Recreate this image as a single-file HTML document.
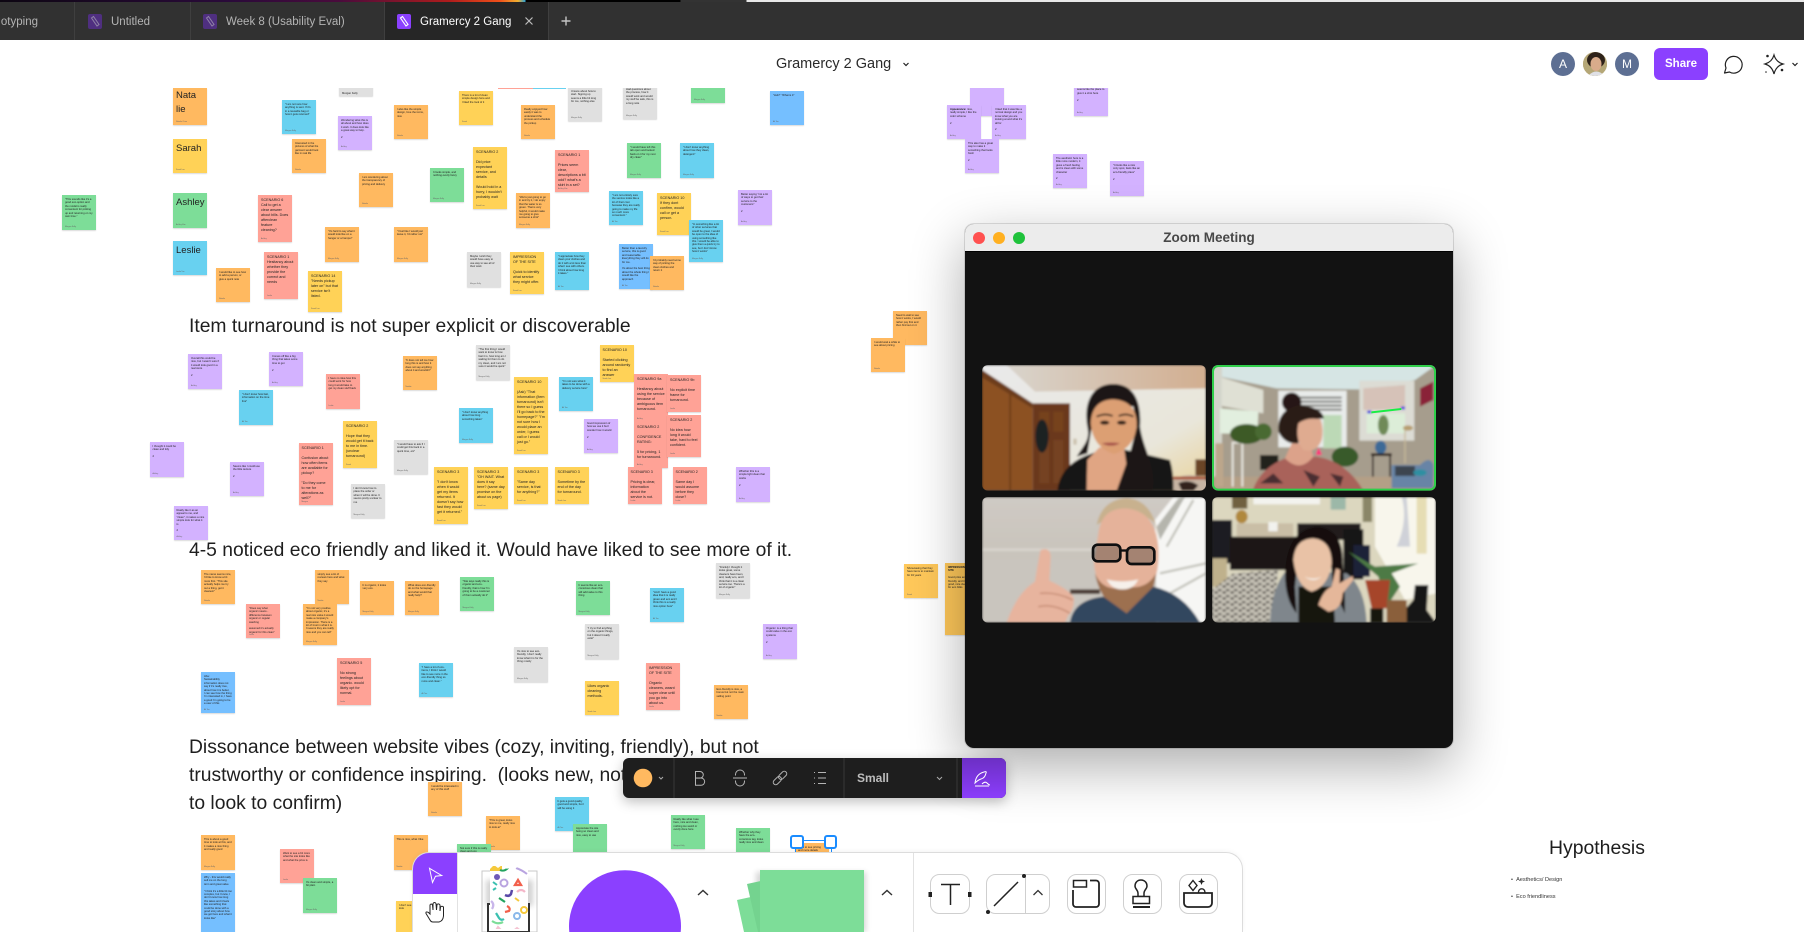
<!DOCTYPE html>
<html><head><meta charset="utf-8"><title>Gramercy 2 Gang</title>
<style>
html,body{margin:0;padding:0;width:1804px;height:932px;overflow:hidden;background:#fff;font-family:"Liberation Sans",sans-serif}
#root{position:absolute;left:0;top:0;width:1804px;height:932px;overflow:hidden;background:#fff}
.abs{position:absolute}
#strip{position:absolute;left:0;top:0;width:1804px;height:2px;background:linear-gradient(90deg,#0d0612 0,#2a0a3a 230px,#4a0b3c 340px,#b01c1c 450px,#f0501a 500px,#f0b030 518px,#30a0d0 525px,#000 526px,#000 680px,#333 681px,#333 746px,#e8e8e8 747px,#e8e8e8 1804px)}
#tabs{position:absolute;left:0;top:2px;width:1804px;height:38px;background:#313131}
#tabs .sep{position:absolute;top:0;width:1px;height:38px;background:#3f3f3f}
#tabs .lbl{position:absolute;top:13px;font-size:11.5px;line-height:14px;color:#b4b4b4;white-space:nowrap}
#active{position:absolute;left:384px;top:0;width:164px;height:38px;background:#262626}
#canvas{position:absolute;left:0;top:88px;width:1804px;height:844px;overflow:hidden;background:#fff}
#title{position:absolute;left:776px;top:55px;font-size:14.5px;line-height:18px;color:#2a2a2a;white-space:nowrap}
.n{position:absolute;width:34px;box-sizing:border-box;padding:3px 3px 0 3px;font-size:2.7px;line-height:3.4px;color:#222;box-shadow:0 1px 1px rgba(0,0,0,.14);overflow:hidden}
.n u{position:absolute;left:3px;bottom:2px;font-size:1.9px;line-height:2px;text-decoration:none;color:#666}
.n.h{font-size:3.7px;line-height:5px}
.n.k{font-size:9.5px;line-height:14px;padding:3px 3px}
.o{background:#ffb960}.y{background:#ffd257}.g{background:#7ddd98}.c{background:#68d1f0}.b{background:#75bfff}.s{background:#ffa296}.v{background:#d3b2ff}.e{background:#e0e0e0}
.hd{position:absolute;left:189px;font-size:19.3px;line-height:28px;color:#1e1e1e;white-space:nowrap;z-index:1}
#zoom{position:absolute;left:965px;top:224px;width:488px;height:524px;border-radius:9px;background:#121212;box-shadow:0 18px 55px rgba(0,0,0,.33),0 0 0 1px rgba(0,0,0,.12);z-index:10;overflow:hidden}
#zt{position:absolute;left:0;top:0;width:488px;height:28px;background:#ececec;text-align:center;font-size:13.5px;font-weight:bold;line-height:28px;color:#484848;border-bottom:1px solid #000;box-sizing:border-box}
.dot{position:absolute;top:8px;width:12px;height:12px;border-radius:50%}
#fmt{position:absolute;left:623px;top:758px;width:383px;height:40px;border-radius:6px;background:#1e1e1e;box-shadow:0 4px 12px rgba(0,0,0,.25);z-index:20;overflow:hidden}
#fmt .sp{position:absolute;top:0;width:2px;height:40px;background:#2b2b2b}
#fmt b{position:absolute;left:234px;top:13px;font-size:12px;line-height:14px;color:#bdbdbd}
#pen{position:absolute;left:339px;top:0;width:44px;height:40px;background:linear-gradient(#6c2fc4,#8b3dfb)}
#bar{position:absolute;left:413px;top:853px;width:829px;height:79px;background:#fff;border-radius:16px 16px 0 0;box-shadow:0 0 0 1px #dcdcdc,0 -1px 6px rgba(0,0,0,.06);z-index:20;overflow:hidden}
#share{position:absolute;left:1654px;top:48px;width:54px;height:32px;border-radius:6px;background:#8b40ff;color:#fff;font-size:11.5px;font-weight:bold;line-height:32px;text-align:center}
.av{position:absolute;top:52px;width:24px;height:24px;border-radius:50%;background:#5d6f93;color:#fff;text-align:center;line-height:24px;font-size:12px}
#hyp{position:absolute;left:1549px;top:836px;font-size:19.4px;line-height:24px;color:#1e1e1e;z-index:2}
.li{position:absolute;left:1511px;font-size:5.6px;line-height:8px;color:#333;white-space:nowrap}
svg{display:block}
</style></head><body>
<div id="root">
<div id="strip"></div>
<div id="tabs">
 <div id="active"></div>
 <div class="sep" style="left:74px"></div><div class="sep" style="left:190px"></div><div class="sep" style="left:384px"></div><div class="sep" style="left:548px"></div>
 <div class="lbl" style="left:0;width:38px;overflow:hidden;direction:rtl">otyping</div>
 <div class="lbl" style="left:111px">Untitled</div>
 <div class="lbl" style="left:226px">Week 8 (Usability Eval)</div>
 <div class="lbl" style="left:420px;color:#fff">Gramercy 2 Gang</div>
</div>

<div id="title">Gramercy 2 Gang</div>
<div class="av" style="left:1551px">A</div>
<div class="av" style="left:1583px;overflow:hidden;background:#b7a67a"><svg width="24" height="24"><rect width="24" height="24" fill="#b5a777"/><ellipse cx="13" cy="8" rx="9" ry="8" fill="#2e221a"/><ellipse cx="13" cy="12" rx="5.5" ry="7" fill="#d9ab8b"/><path d="M5 24 Q13 15 22 24Z" fill="#dfe0e6"/></svg></div>
<div class="av" style="left:1615px">M</div>
<div id="share">Share</div>

<div id="canvas"><div class="abs" style="left:0;top:-88px;width:1804px;height:932px">
<div class="n o k" style="left:173px;top:88px;height:37px;padding-top:1px">Nata<br>lie<u>Natalie Chan</u></div>
<div class="n y k" style="left:173px;top:139px;height:34px">Sarah<u>Sarah Lee</u></div>
<div class="n g k" style="left:173px;top:193px;height:35px">Ashley<u>Ashley Kim</u></div>
<div class="n c k" style="left:173px;top:241px;height:34px">Leslie<u>Leslie Tan</u></div>
<div class="n g" style="left:62px;top:195px;height:35px">"This sounds like it's a good eco-option and the model is really convenient for picking up and returning on my own time."<u>Morgan Kelly</u></div>
<div class="n c" style="left:282px;top:100px;height:34px">"I am not sure how anything is sent. If it's in a reusable bag or how it gets returned"<u>Morgan Kelly</u></div>
<div class="n e" style="left:339px;top:75px;height:21px"><br><br><br><br>Morgan Kelly</div>
<div class="n v" style="left:338px;top:116px;height:34px">Wondering what this is all about and how does it work. It does look like a great way to help.<br><br>2<u>Ashley</u></div>
<div class="n o" style="left:292px;top:139px;height:34px">Interested in the pictures of what the garment would look like in real life<u>Natalie</u></div>
<div class="n o" style="left:394px;top:105px;height:34px">I also like the simple design, love the icons, nice<u>Natalie</u></div>
<div class="n y" style="left:459px;top:91px;height:34px">There is a lot of clean simple design here and I liked the look of it<u>Sarah</u></div>
<div class="n o" style="left:521px;top:105px;height:34px">Really enjoyed how easily it was to understand the process and schedule the pickup<u>Natalie</u></div>
<div class="n e" style="left:568px;top:87px;height:34px">Unsure about how to start. Signing up seems a little bit long for me, nothing else<u>Morgan Kelly</u></div>
<div class="n e" style="left:623px;top:85px;height:34px">Had questions about the process, how it would work and would my stuff be safe, this is a long note<u>Morgan Kelly</u></div>
<div class="n g" style="left:691px;top:69px;height:34px"><u>Morgan Kelly</u></div>
<div class="n b" style="left:770px;top:91px;height:34px">"Huh!" "What is it"<u>Ali Tan</u></div>
<div class="abs" style="left:498px;top:88px;width:35px;height:1px;background:#ffa296"></div>
<div class="abs" style="left:533px;top:88px;width:33px;height:1px;background:#68d1f0"></div>
<div class="n y h" style="left:473px;top:147px;height:62px">SCENARIO 2<br><br>Did price expectant service, and details<br><br>Would hold in a hurry, I wouldn't probably wait<u>Sarah Lee</u></div>
<div class="n s h" style="left:555px;top:150px;height:42px">SCENARIO 1<br><br>Prices seem clear, descriptions a bit odd? what's a skirt in a set?<u>Ashley Kim</u></div>
<div class="n g" style="left:627px;top:143px;height:35px">"I would have left this tab open and looked back on it for my next dry clean"<u>Morgan Kelly</u></div>
<div class="n c" style="left:680px;top:143px;height:35px">"I don't know anything about how they clean, detergent"<u>Morgan Kelly</u></div>
<div class="n o" style="left:359px;top:173px;height:34px">I am wondering about the transparency of pricing and delivery<u>Natalie</u></div>
<div class="n g" style="left:430px;top:168px;height:34px">It looks simple, and nothing overly fancy<u>Morgan Kelly</u></div>
<div class="n s h" style="left:258px;top:195px;height:47px">SCENARIO 6<br>Call to get a clear answer about bills. Does afterclean feature cleaning?<u>Ashley</u></div>
<div class="n o" style="left:516px;top:193px;height:35px">"We're just going to go in and try it, I do enjoy that the water is so green. That is very helpful, it would make me going to give someone a shot"<u>Morgan Kelly</u></div>
<div class="n c" style="left:609px;top:191px;height:34px">"I am not entirely sure the service looks like a lot of their cost because they are really going to make my life so much more convenient."<u>Ali Tan</u></div>
<div class="n y h" style="left:657px;top:193px;height:42px">SCENARIO 10<br>If they dont confirm, would call or get a person.<u>Sarah Lee</u></div>
<div class="n v" style="left:738px;top:190px;height:35px">Better saying "not a lot of ways to get their service to the customers"<br><br>2<u>Ashley</u></div>
<div class="n c" style="left:689px;top:220px;height:42px">"In something like a lot of other services that would be great, I would be open to the idea of using something like this. I would be able to give them a quick try to see, but I don't know how it works"<u>Morgan Kelly</u></div>
<div class="n o" style="left:325px;top:227px;height:35px">"It's hard to say what it would look like on a hanger or a hamper"<u>Morgan Kelly</u></div>
<div class="n o" style="left:394px;top:227px;height:35px">"I feel like I would just leave it, I'd rather not"<u>Morgan Kelly</u></div>
<div class="n s h" style="left:264px;top:252px;height:47px">SCENARIO 1<br>Hesitancy about whether they provide the correct and needs<u>Leslie</u></div>
<div class="n o" style="left:216px;top:268px;height:34px">I would like to see how to add a person, or give a quick note<u>Natalie</u></div>
<div class="n y h" style="left:308px;top:271px;height:41px">SCENARIO 14<br>"Needs pickup later on" but that service isn't listed.<u>Sarah Lee</u></div>
<div class="n e" style="left:467px;top:252px;height:35px">Maybe I wish they would have easy to use way to see all of their work<u>Morgan Kelly</u></div>
<div class="n y h" style="left:510px;top:252px;height:42px">IMPRESSION OF THE SITE<br><br>Quick to identify what service they might offer.<u>Sarah Lee</u></div>
<div class="n c" style="left:555px;top:252px;height:38px">"I appreciate how they clean your clothes and do it with a lot less than what I see with others. I think about how long it takes."<u>Ali Tan</u></div>
<div class="n b" style="left:619px;top:244px;height:45px">Better than a laundry service, this is good and reasonable. Everything they will do for me.<br><br>It's about the best thing about the whole thing I would like the approach<u>Ali Tan</u></div>
<div class="n o" style="left:650px;top:256px;height:34px">I'd probably need some way of picking the clean clothes and return it<u>Natalie</u></div>

<div class="n v" style="left:970px;top:75px;height:41px">Wonder this</div>
<div class="n v" style="left:947px;top:105px;height:34px"><b>Appearance:</b> nice, really simple, I like the color scheme<br><br>2<u>Ashley</u></div>
<div class="n v" style="left:992px;top:105px;height:34px">I liked that it was like a normal design and you know what you are looking at and what it's all for<br><br>2<u>Ashley</u></div>
<div class="n v" style="left:965px;top:139px;height:34px">This also has a great way to make it something that looks fresh<br><br>2<u>Ashley</u></div>
<div class="n v" style="left:1074px;top:82px;height:34px">Nice and clean look, it seems like the place to give it a shot here<br><br>2<u>Ashley</u></div>
<div class="n v" style="left:1053px;top:154px;height:34px">The aesthetic here is a little more modern, it gives a fresh feeling and is clean with some character<br><br>2<u>Ashley</u></div>
<div class="n v" style="left:1110px;top:161px;height:35px">"It looks like a nice cozy spot, feels like an eco-friendly place"<br><br>2<u>Ashley</u></div>
<div class="n o" style="left:893px;top:311px;height:34px">Need to wait to see how it works, I would rather pay first and then find out on it<u>Natalie</u></div>
<div class="n o" style="left:871px;top:338px;height:34px">I would wait a while to see about pricing<u>Natalie</u></div>

<div class="n v" style="left:188px;top:354px;height:35px">Overall this could be nice, but I wasn't sure if it would look good in a real store<br><br>2<u>Ashley</u></div>
<div class="n v" style="left:269px;top:352px;height:34px">Comes off like a big thing that takes some time to get<br><br>2<u>Ashley</u></div>
<div class="n s" style="left:325.5px;top:374px;height:35px">I have no idea how this could work for how long it would take to get my clean stuff back<u>Leslie</u></div>
<div class="n o" style="left:402.5px;top:356px;height:34px">"It does not tell me how long this is and how it does not say anything about it and wouldn't"<u>Natalie</u></div>
<div class="n e" style="left:475.5px;top:345px;height:35px">"The first thing I would want to know is how fast it is, how long am I waiting for them to do my clean, and I am not sure it would be quick"<u>Morgan Kelly</u></div>
<div class="n y h" style="left:599.5px;top:345px;height:37px">SCENARIO 10<br><br>Started clicking around randomly to find an answer<u>Sarah Lee</u></div>
<div class="n c" style="left:239px;top:390px;height:35px">"I don't know how fast, information on the time line"<u>Ali Tan</u></div>
<div class="n y h" style="left:514px;top:377px;height:77px">SCENARIO 10<br><br>(Ask) "That information (item turnaround) isn't there so I guess I'll go back to the homepage?" "I'm not sure how I would place an order, I guess call or I would just go."<u>Sarah Lee</u></div>
<div class="n c" style="left:559px;top:377px;height:34px">"I'm not sure what it takes to be done with a delivery service here"<u>Ali Tan</u></div>
<div class="n s h" style="left:634px;top:374px;height:48px">SCENARIO 9a<br><br>Hesitancy about using the service because of ambiguous item turnaround.<u>Ashley</u></div>
<div class="n s h" style="left:634px;top:422px;height:46px">SCENARIO 2<br><br>CONFIDENCE RATING:<br><br>5 for pricing, 1 for turnaround.<u>Ashley</u></div>
<div class="n s h" style="left:667px;top:375px;height:37px">SCENARIO 9b<br><br>No explicit time frame for turnaround.<u>Leslie</u></div>
<div class="n s h" style="left:667px;top:415px;height:42px">SCENARIO 2<br><br>No idea how long it would take, hard to feel confident.<u>Leslie</u></div>
<div class="n c" style="left:459px;top:408px;height:35px">"I don't know anything about how long something takes"<u>Morgan Kelly</u></div>
<div class="n v" style="left:584px;top:419px;height:34px">Good impression of how we use it but I wonder how it would<br><br>2<u>Ashley</u></div>
<div class="n y h" style="left:343px;top:421px;height:47px">SCENARIO 2<br><br>Hope that they would get it back to me in time. (unclear turnaround)<u>Sarah</u></div>
<div class="n e" style="left:394px;top:440px;height:34px">"I would have to ask if I could get this back in a quick time, etc"<u>Morgan Kelly</u></div>
<div class="n s h" style="left:298.5px;top:443px;height:62px">SCENARIO 1<br><br>Confusion about how often items are available for pickup?<br><br>"Do they come to me for alterations as well?"<u>Morgan</u></div>
<div class="n v" style="left:149.5px;top:442px;height:35px">I thought it could be clean and tidy<br><br>2<u>Ashley</u></div>
<div class="n v" style="left:230px;top:462px;height:34px">Seems like I could use the little texture<br><br>2<u>Ashley</u></div>
<div class="n e" style="left:350.5px;top:484px;height:34px">I don't know how to place the order or when it will be done. It seems pretty unclear to me<u>Morgan Kelly</u></div>
<div class="n y h" style="left:434px;top:467px;height:57px">SCENARIO 3<br><br>"I don't know when it would get my items returned. It doesn't say how fast they would get it returned."<u>Sarah Lee</u></div>
<div class="n y h" style="left:474px;top:467px;height:42px">SCENARIO 3<br>"OH WAIT. What does it say here? (same day promise on the about us page)<u>Sarah Lee</u></div>
<div class="n y h" style="left:514px;top:467px;height:37px">SCENARIO 3<br><br>"Same day service, is that for anything?"<u>Sarah Lee</u></div>
<div class="n y h" style="left:554.5px;top:467px;height:37px">SCENARIO 3<br><br>Sometime by the end of the day for turnaround.<u>Sarah Lee</u></div>
<div class="n s h" style="left:627.5px;top:467px;height:37px">SCENARIO 3<br><br>Pricing is clear, information about the service is not.<u>Leslie</u></div>
<div class="n s h" style="left:672.5px;top:467px;height:37px">SCENARIO 2<br><br>Same day I would assume before they close?<u>Leslie</u></div>
<div class="n v" style="left:736px;top:467px;height:35px">Whether this is a simple light clean that works<br><br>2<u>Ashley</u></div>
<div class="n v" style="left:173.5px;top:506px;height:34px">Really like it as an appeal to me, and "clean", it makes a nice simple look for what it is<br><br>2<u>Ashley</u></div>

<div class="n o" style="left:201px;top:570px;height:34px">The name seems nice, I'd like to know a bit more first. "This site actually helps me try out a thing, get it cleaned."<u>Natalie</u></div>
<div class="n o" style="left:314.5px;top:570px;height:34px">simply see a lot of reviews here and what they say<u>Natalie</u></div>
<div class="n s" style="left:246px;top:604px;height:34px">"Does say what organic means - difference between organic or regular washing<br><br>assumed it's actually organic for this clean"<u>Leslie</u></div>
<div class="n o" style="left:303px;top:604px;height:41px">"I'm not very positive about organic, it's a real nice value it would make a company's impression. There is a lot of trust in what it is. It seems they are really nice and you can tell"<u>Morgan Kelly</u></div>
<div class="n o" style="left:359.5px;top:581px;height:34px">It is organic, it looks very eco.<u>Morgan Kelly</u></div>
<div class="n o" style="left:405px;top:581px;height:34px">What does eco-friendly do on the homepage and what would that really help?<u>Morgan Kelly</u></div>
<div class="n g" style="left:459.5px;top:577px;height:34px">"Site says really this is organic and eco-friendly, that is how I'm going to be a customer of them actually do it"<u>Morgan Kelly</u></div>
<div class="n g" style="left:575.5px;top:581px;height:34px">It seems like an eco-conscious clean that will add value to this thing<u>Morgan Kelly</u></div>
<div class="n c" style="left:650px;top:588px;height:34px">"And I have a good idea that it is really green and eco and I think this is a really nice option here"<u>Ali Tan</u></div>
<div class="n e" style="left:716px;top:563px;height:35px">"Frankly I thought it looks great, some cleaners have been, and, really eco, and I think that it is a clean service too. There's a lot of organic"<u>Morgan Kelly</u></div>
<div class="n e" style="left:584.5px;top:624px;height:35px">"I try to find anything on the organic things, but it doesn't really exist"<u>Morgan Kelly</u></div>
<div class="n v" style="left:763px;top:624px;height:35px">Organic: is a thing that could value in the eco systems<br><br>2<u>Ashley</u></div>
<div class="n e" style="left:514px;top:647px;height:35px">It's nice to see eco-friendly, I don't really know what it is for the thing mostly<u>Morgan Kelly</u></div>
<div class="n b" style="left:201px;top:672px;height:41px">Aha:<br>Sustainability information does not say if it's really true, about how it is better,<br>I can see how the thing I'm interested in, I have a good I'm going to be a user of this<u>Ali Tan</u></div>
<div class="n s h" style="left:337px;top:658px;height:47px">SCENARIO 5<br><br>No strong feelings about organic. would likely opt for normal.<u>Leslie</u></div>
<div class="n c" style="left:418.5px;top:663px;height:34px">"I have a lot of eco-items, I think I would like to see more in the eco-friendly thing so more and clean."<u>Ali Tan</u></div>
<div class="n s h" style="left:646px;top:663px;height:47px">IMPRESSION OF THE SITE<br><br>Organic cleaners, wasnt super clear until you go into about us.<u>Leslie</u></div>
<div class="n y h" style="left:584.5px;top:681px;height:34px">Likes organic cleaning methods.<u>Sarah Lee</u></div>
<div class="n o" style="left:713.5px;top:685px;height:34px">Eco-friendly is nice, a bonus but not the main selling point<u>Natalie</u></div>

<div class="n c" style="left:554.5px;top:797px;height:34px">It gets a good quality good and simple, but I will be using it<u>Ali Tan</u></div>
<div class="n o" style="left:486px;top:816px;height:34px">"This is great, looks nice to me, really nice to look at"<u>Natalie</u></div>
<div class="n g" style="left:573px;top:824px;height:34px">Appreciate the site being so clean and nice, easy to use<u>Morgan Kelly</u></div>
<div class="n g" style="left:670.5px;top:815px;height:34px">Really like what I see here, nice and clean, nothing too weird or overly done here<u>Morgan Kelly</u></div>
<div class="n g" style="left:736px;top:828px;height:34px">Whether why they have the eco-conscious tag, looks really nice and clean<u>Morgan Kelly</u></div>
<div class="n o" style="left:201px;top:835px;height:35px">This is about a good time to look at this, and it makes a nice thing and really good<u>Morgan Kelly</u></div>
<div class="n s" style="left:280px;top:849px;height:34px">Want to see a bit more what the site looks like and what the price is<u>Leslie</u></div>
<div class="n o" style="left:393.5px;top:835px;height:35px">This is nice, what I like<u>Natalie</u></div>
<div class="n g" style="left:457px;top:844px;height:34px">Not sure if this is really clean and eco<u>Morgan</u></div>
<div class="n g" style="left:303px;top:878px;height:35px">It's clean and simple, a bit plain<u>Morgan Kelly</u></div>
<div class="n b" style="left:201px;top:873px;height:59px">Why - this would really sell me on the long term and great value<br><br>"I think it's a little bit too complex, but I know, I don't know how long this takes and it feels like something that could be done with a good story about how we got here and what it looks like"</div>
<div class="n y" style="left:396px;top:901px;height:31px">I don't see how it would look</div>
<div class="n o" style="left:795px;top:843px;height:34px">Want to see pricing and more details</div>

<div class="hd" style="top:313px">Item turnaround is not super explicit or discoverable</div>
<div class="hd" style="top:537px">4-5 noticed eco friendly and liked it. Would have liked to see more of it.</div>
<div class="hd" style="top:734px">Dissonance between website vibes (cozy, inviting, friendly), but not<br>trustworthy or confidence inspiring.&nbsp; (looks new, not sure where<br>to look to confirm)</div>
<div id="hyp">Hypothesis</div>
<div class="li" style="top:876px">•&nbsp;&nbsp;Aesthetics/ Design</div>
<div class="li" style="top:893px">•&nbsp;&nbsp;Eco friendliness</div>
<div class="n o" style="left:428px;top:782px;height:34px;z-index:2">I would be interested in any of this stuff<u>Natalie</u></div>
<div class="n y" style="left:904px;top:564px;height:34px;background:#ffc85a">Showcasing that they have items to maintain for 34 years<u>Sarah</u></div>
<div class="n y" style="left:945px;top:563px;height:72px;background:#ffc85a"><b>IMPRESSION OF THE SITE</b><br><br>Good price and friendly, and trust is good, nice clean look for eco folks</div>
<div class="abs" style="left:790px;top:835px;width:10px;height:10px;border:2px solid #1a8cff;border-radius:3px;background:#fff;z-index:3"></div>
<div class="abs" style="left:824px;top:835px;width:9px;height:10px;border:2px solid #1a8cff;border-radius:3px;background:#fff;z-index:3"></div>
<div class="abs" style="left:795px;top:840px;width:35px;height:40px;border:1.5px solid #1a8cff;z-index:2"></div>
</div></div>

<div id="zoom">
 <div id="zt">Zoom Meeting</div>
 <div class="dot" style="left:8px;background:#ff5150"></div>
 <div class="dot" style="left:28px;background:#ffb021"></div>
 <div class="dot" style="left:48px;background:#1fc23b"></div>
</div>

<svg class="abs" style="left:970px;top:360px;z-index:11" width="480" height="270" viewBox="0 0 1440 810">
<defs>
<clipPath id="t1"><rect x="36" y="15" width="672" height="377" rx="18"/></clipPath>
<clipPath id="t2"><rect x="726" y="15" width="672" height="377" rx="18"/></clipPath>
<clipPath id="t3"><rect x="36" y="411" width="672" height="377" rx="18"/></clipPath>
<clipPath id="t4"><rect x="726" y="411" width="672" height="377" rx="18"/></clipPath>
<filter id="bl"><feGaussianBlur stdDeviation="3"/></filter>
<linearGradient id="w1" x1="0" x2="1" y1="0" y2="1"><stop offset="0" stop-color="#e9e9ea"/><stop offset=".7" stop-color="#e9e6da"/><stop offset="1" stop-color="#e8d299"/></linearGradient>
<linearGradient id="c1" x1="0" x2="1"><stop offset="0" stop-color="#d9d4cc"/><stop offset="1" stop-color="#d2ae90"/></linearGradient>
<linearGradient id="w3" x1="0" x2="0" y1="0" y2="1"><stop offset="0" stop-color="#cfcac4"/><stop offset=".45" stop-color="#c9c4bc"/><stop offset="1" stop-color="#c5c0b8"/></linearGradient>
<pattern id="rug" width="24" height="18" patternUnits="userSpaceOnUse"><rect width="24" height="18" fill="#c4c0b4"/><path d="M0 4h10v5H0zM14 11h9v5h-9z" fill="#1a1714"/></pattern>
</defs>
<g clip-path="url(#t1)"><g filter="url(#bl)">
<rect x="36" y="15" width="672" height="377" fill="url(#w1)"/>
<polygon points="110,15 708,15 708,85 195,95" fill="url(#c1)"/>
<polygon points="36,30 188,130 188,392 36,392" fill="#8c5124"/>
<polygon points="36,30 188,130 188,145 36,52" fill="#6d3d1c"/>
<rect x="118" y="100" width="5" height="292" fill="#6a3a18"/>
<rect x="188" y="130" width="112" height="262" fill="#6a381b"/>
<rect x="208" y="155" width="30" height="60" fill="#76431f"/><rect x="250" y="155" width="30" height="60" fill="#76431f"/>
<rect x="208" y="240" width="30" height="130" fill="#754220"/><rect x="250" y="240" width="30" height="130" fill="#754220"/>
<ellipse cx="216" cy="228" rx="20" ry="50" fill="#1e2022"/>
<rect x="310" y="236" width="10" height="18" fill="#cbc1ad"/>
<rect x="676" y="298" width="32" height="50" fill="#6a4426"/>
<ellipse cx="660" cy="375" rx="55" ry="30" fill="#c6b4a3"/><path d="M625 370q30-15 60 6l-14 16h-36z" fill="#30241e"/><rect x="610" y="350" width="98" height="8" fill="#a6492c"/>
<path d="M262 392 Q270 320 345 288 L400 268 L460 268 L600 300 Q612 340 610 392Z" fill="#171314"/>
<path d="M350 392 L352 300 L388 262 L462 262 L470 320 L450 392Z" fill="#e0a583"/>
<path d="M352 200 C340 130 365 72 430 72 C495 72 515 130 510 200 C520 270 560 320 548 392 L440 392 L480 280 L500 200 L490 140 Q430 130 370 170 L362 220 L352 280 L320 290 C345 250 360 240 352 200Z" fill="#1d1613"/>
<path d="M362 190 Q365 120 430 118 Q498 122 500 190 Q498 262 432 282 Q368 262 362 190Z" fill="#dc9f73"/>
<path d="M380 170q25-12 48-2M446 168q22-10 44 2" stroke="#1c1310" stroke-width="5" fill="none"/>
<ellipse cx="404" cy="188" rx="14" ry="6" fill="#2a1e18"/><ellipse cx="455" cy="188" rx="14" ry="6" fill="#2a1e18"/>
<path d="M395 250q28 14 55 0q-26-4-55 0Z" fill="#a54f48"/>
</g></g>
<g clip-path="url(#t2)"><g filter="url(#bl)">
<rect x="726" y="15" width="672" height="377" fill="#a69d8d"/>
<polygon points="735,15 1398,15 1335,60 1170,88 920,85 750,50" fill="#d6e5e4"/>
<rect x="726" y="15" width="30" height="377" fill="#d3d4cb"/>
<polygon points="755,52 880,90 880,160 755,138" fill="#dfe0d4"/>
<polygon points="750,145 865,155 862,222 750,220" fill="#e2efdf"/>
<rect x="925" y="92" width="205" height="170" fill="#e8ebea"/>
<rect x="1060" y="165" width="55" height="100" fill="#bcd9b6"/>
<path d="M985 110h130v6h-130zM985 122h130v6h-130zM985 134h130v6h-130zM985 146h130v6h-130z" fill="#7d7d78"/>
<rect x="1168" y="62" width="165" height="180" fill="#dcdcd4"/>
<polygon points="1180,85 1305,75 1305,148 1180,150" fill="#d6c2b8"/>
<rect x="1190" y="160" width="115" height="60" fill="#dcedd8"/>
<ellipse cx="1240" cy="195" rx="16" ry="30" fill="#6f8a58"/>
<ellipse cx="1232" cy="262" rx="17" ry="20" fill="#3c6a97"/>
<rect x="1203" y="280" width="62" height="8" fill="#2c1e18"/><rect x="1206" y="288" width="5" height="85" fill="#2c1e18"/><rect x="1258" y="288" width="5" height="85" fill="#2c1e18"/>
<rect x="1303" y="205" width="4" height="105" fill="#c8b99a"/><ellipse cx="1314" cy="204" rx="15" ry="8" fill="#b79e6f"/>
<polygon points="1350,85 1390,65 1390,120 1350,140" fill="#8a2338"/>
<rect x="726" y="350" width="672" height="42" fill="#b49f86"/>
<path d="M1265 315h85q30-30 40 0v70h-125z" fill="#6884a6"/><rect x="1275" y="318" width="60" height="30" fill="#3d4450"/><ellipse cx="1350" cy="338" rx="20" ry="10" fill="#2e8fa2"/>
<rect x="736" y="250" width="24" height="130" fill="#bca68b"/>
<rect x="785" y="245" width="60" height="6" fill="#e8e6df"/><rect x="785" y="250" width="6" height="130" fill="#e8e6df"/><rect x="814" y="250" width="6" height="130" fill="#e8e6df"/>
<ellipse cx="830" cy="222" rx="50" ry="30" fill="#3c5a26"/><ellipse cx="880" cy="215" rx="25" ry="25" fill="#4a6b33"/>
<ellipse cx="1125" cy="290" rx="40" ry="30" fill="#385a2b"/>
<rect x="870" y="285" width="55" height="45" fill="#23201f"/>
<path d="M848 392 Q870 325 945 295 L1040 290 Q1130 305 1180 392Z" fill="#a9625a"/>
<path d="M870 370l40-30 30 30zM1000 330l50 20-20 30zM1080 340l40 10-10 30z" fill="#4a2f30"/>
<path d="M945 295 Q990 340 1030 290 L1020 250 L965 250Z" fill="#dca28a"/>
<circle cx="965" cy="127" r="29" fill="#261712"/>
<path d="M925 215 Q920 150 985 135 Q1055 140 1062 175 L1005 180 L985 250 Q945 255 925 215Z" fill="#2a1a14"/>
<path d="M985 190 Q1010 170 1052 178 Q1062 210 1055 240 Q1040 280 1000 270 Q975 240 985 190Z" fill="#dfab90"/>
<polygon points="1037,285 1046,262 1056,285" fill="#ff2f7a"/>
<rect x="1192" y="152" width="12" height="8" fill="#2222dd"/><rect x="1293" y="140" width="12" height="8" fill="#2222dd"/>
</g><polygon points="1204,154 1294,144 1294,150 1204,160" fill="#18ee44"/></g>
<rect x="729" y="18" width="666" height="371" rx="16" fill="none" stroke="#2fcf4a" stroke-width="6"/>
<g clip-path="url(#t3)"><g filter="url(#bl)">
<rect x="36" y="411" width="672" height="377" fill="url(#w3)"/>
<rect x="36" y="565" width="530" height="8" fill="#d8d4cd"/><rect x="36" y="597" width="530" height="191" fill="#c9c5be"/>
<polygon points="555,480 610,411 708,411 708,788 560,788" fill="#f6f6f4"/>
<path d="M560 500 L625 415 L645 411 L570 540Z" fill="#b5b5ad"/>
<path d="M590 560 L670 420 M570 640 L708 610 M600 700 L708 640" stroke="#c2c2ba" stroke-width="7" fill="none"/>
<rect x="300" y="688" width="90" height="14" fill="#4b3c36"/>
<path d="M380 495 Q395 420 470 414 Q550 420 565 530 L555 490 Q500 440 420 470Z" fill="#c8b18e"/>
<path d="M385 520 Q395 445 465 445 Q555 450 565 560 Q575 700 470 758 Q385 730 372 610Z" fill="#e5b29a"/>
<path d="M375 640 Q400 700 470 680 Q530 690 558 640 Q550 730 470 760 Q395 740 375 640Z" fill="#9d7050"/>
<path d="M410 658 Q455 670 505 658 Q490 690 455 688 Q425 688 410 658Z" fill="#f6f0ea"/>
<path d="M300 788 Q310 720 400 710 L470 760 L550 680 Q640 700 690 788Z" fill="#33465e"/>
<path d="M110 788 Q140 700 195 665 Q205 600 212 570 Q240 560 242 590 L238 662 Q300 690 312 715 Q312 750 295 765 L285 788Z" fill="#e7b49e"/>
<path d="M210 700 Q260 695 308 720M205 740 Q250 730 300 760" stroke="#c48a72" stroke-width="4" fill="none"/>
</g>
<rect x="369" y="554" width="82" height="50" rx="14" fill="#2a2a28" fill-opacity=".35" stroke="#0f0f10" stroke-width="8"/>
<rect x="471" y="562" width="82" height="50" rx="14" fill="#2a2a28" fill-opacity=".35" stroke="#0f0f10" stroke-width="8"/>
<rect x="450" y="568" width="22" height="7" fill="#0f0f10"/></g>
<g clip-path="url(#t4)"><g filter="url(#bl)">
<rect x="726" y="411" width="672" height="377" fill="#dcd7bf"/>
<rect x="850" y="411" width="200" height="22" fill="#f3f3ee"/>
<rect x="786" y="411" width="46" height="35" fill="#6f6040"/>
<rect x="1082" y="411" width="45" height="38" fill="#9cb8a8"/>
<rect x="1178" y="411" width="28" height="75" fill="#8a8668"/>
<polygon points="1215,411 1398,411 1398,700 1305,720 1215,560" fill="#f8f6ec"/>
<rect x="1340" y="411" width="30" height="170" fill="#e6ddb4"/>
<path d="M1295 411 Q1315 480 1280 560L1320 560 L1310 411Z" fill="#cfd1d8"/>
<rect x="726" y="480" width="60" height="130" fill="#1c1c20"/>
<rect x="726" y="595" width="45" height="85" fill="#bfb18c"/>
<rect x="780" y="530" width="200" height="100" fill="#1c1816"/>
<rect x="982" y="490" width="190" height="50" fill="#241e1c"/>
<ellipse cx="815" cy="470" rx="18" ry="20" fill="#b0883c"/><rect x="800" y="490" width="170" height="40" fill="#c9bea6"/>
<rect x="895" y="486" width="28" height="28" fill="#f2f2ee"/>
<polygon points="726,788 726,690 790,640 925,630 905,788" fill="url(#rug)"/>
<rect x="1120" y="508" width="60" height="150" fill="#141418"/><rect x="1150" y="555" width="50" height="95" fill="#1b2438"/>
<path d="M900 788 Q905 680 950 630 L1130 640 Q1185 680 1190 788Z" fill="#7f868c"/>
<path d="M985 790 L985 680 L1090 680 L1095 790Z" fill="#16130f"/>
<path d="M945 640 Q950 510 1040 500 Q1120 505 1118 610 Q1125 680 1125 760 L1090 690 L1080 580 Q1020 560 985 590 L975 680 L980 760 Q945 720 945 640Z" fill="#14100e"/>
<path d="M970 600 Q975 535 1030 535 Q1085 540 1085 610 Q1075 680 1025 695 Q980 680 970 600Z" fill="#e9c2a6"/>
<path d="M1003 650 Q1030 662 1055 650 Q1030 670 1003 650Z" fill="#f6f3ee"/>
<path d="M1045 735 Q1060 690 1085 680 L1098 625 L1110 630 L1108 670 L1148 648 L1150 660 L1118 700 Q1115 750 1075 755Z" fill="#e5b79a"/>
<path d="M1135 575 L1215 620 L1345 610 L1265 640 L1290 680 L1250 740 L1225 650Z" fill="#4d7a44"/>
<path d="M1185 660 L1260 660 L1250 745 L1205 745Z" fill="#a6442a"/>
<rect x="1200" y="745" width="40" height="43" fill="#16130f"/>
<path d="M1270 788 L1330 720 L1335 675 L1375 675 L1370 750 L1398 788Z" fill="#161618"/>
<rect x="1250" y="720" width="60" height="68" fill="#8a5f3a"/>
</g></g>
</svg>

<div id="fmt">
 <div class="sp" style="left:50px"></div><div class="sp" style="left:220px"></div><div class="sp" style="left:333px"></div>
 <b>Small</b>
 <div id="pen"></div>
</div>

<div id="bar">
 <div class="abs" style="left:0;top:0;width:44px;height:41px;background:#8b40ff"></div>
 <div class="abs" style="left:44px;top:0;width:1px;height:79px;background:#e2e2e2"></div>
 <div class="abs" style="left:500px;top:0;width:1px;height:79px;background:#e2e2e2"></div>
</div>

<svg class="abs" style="left:0;top:0;z-index:30;pointer-events:none" width="1804" height="932" viewBox="0 0 1804 932">
<defs>
<filter id="sh" x="-30%" y="-30%" width="160%" height="160%"><feGaussianBlur stdDeviation="3"/></filter>
<clipPath id="tp"><path d="M490 869l4-4 4 3 4-3 5 4 5-4 4 3 4-3 4 4 4-3v63h-38z"/></clipPath>
</defs>
<g>
<rect x="88" y="14" width="14" height="15" rx="2" fill="#4f2f80"/><path d="M91.5 18l2-1.5 5.5 8-2 1.5z" fill="none" stroke="#8f83a6" stroke-width="1"/>
<rect x="203" y="14" width="14" height="15" rx="2" fill="#4f2f80"/><path d="M206.5 18l2-1.5 5.5 8-2 1.5z" fill="none" stroke="#8f83a6" stroke-width="1"/>
<rect x="397" y="14" width="14" height="15" rx="2" fill="#8b40ff"/><path d="M400.5 18l2-1.5 5.5 8-2 1.5z" fill="none" stroke="#fff" stroke-width="1.1"/>
<path d="M525.5 17.5l7 7M532.5 17.5l-7 7" stroke="#bdbdbd" stroke-width="1.2"/>
<path d="M566 16.5v9M561.5 21h9" stroke="#c4c4c4" stroke-width="1.4"/>
</g>
<path d="M903.5 63l2.5 2.5 2.5-2.5" fill="none" stroke="#222" stroke-width="1.2"/>
<path d="M1724.5 73 L1726 68 A8.4 8.4 0 1 1 1729.5 72 Z" fill="none" stroke="#222" stroke-width="1.2" stroke-linejoin="round"/>
<path d="M1774 55 Q1776 62 1783 64 Q1776 66 1774 74 Q1772 66 1765 64 Q1772 62 1774 55Z" fill="none" stroke="#222" stroke-width="1.2"/>
<circle cx="1767.5" cy="56" r="1.3" fill="#222"/><circle cx="1782" cy="70" r="1.3" fill="#222"/><circle cx="1766" cy="72" r=".8" fill="#222"/>
<path d="M1792.5 63l2.5 2.5 2.5-2.5" fill="none" stroke="#222" stroke-width="1.2"/>
<circle cx="643" cy="778" r="9.3" fill="#ffb960"/>
<path d="M659 777l2 2 2-2" fill="none" stroke="#aaa" stroke-width="1"/>
<path d="M695.5 771.5h4.5a3.3 3.3 0 0 1 0 6.6h-4.500zM695.500 778h5.500a3.600 3.600 0 0 1 0 7.300h-5.500z" fill="none" stroke="#b5b5b5" stroke-width="1"/>
<path d="M733 778h14" stroke="#b5b5b5" stroke-width="1"/>
<path d="M735.500 775.500v-1a4 4 0 0 1 9 0v1M735.500 780.500v1a4 4 0 0 0 9 0v-1" fill="none" stroke="#b5b5b5" stroke-width="1"/>
<g transform="rotate(-45 780 778)" fill="none" stroke="#b5b5b5" stroke-width="1"><rect x="771.500" y="775.500" width="9.500" height="5" rx="2.500"/><rect x="779" y="775.500" width="9.500" height="5" rx="2.500"/></g>
<path d="M814 772.500h1M814 778h1M814 783.500h1M818 772.500h8M818 778h8M818 783.500h8" stroke="#b5b5b5" stroke-width="1"/>
<path d="M937 777l2.500 2.500 2.500-2.500" fill="none" stroke="#aaa" stroke-width="1"/>
<path d="M975 786h14M975 783 Q976 774 984 772 Q987 771 986 773 Q985 778 981 779 Q978 780 975 783ZM982 784q3-3 5-1t3 2" fill="none" stroke="#fff" stroke-width="1"/>
<path d="M429.500 868.300 L441.700 875.500 L435.500 876.200 L432.500 882.500Z" fill="none" stroke="#fff" stroke-width="1"/>
<path d="M430 920 L426 913.500 Q425.500 911 428.500 912.500 L430 914 L430 905 Q431 903 432.500 905 L433 910 L433 903.500 Q434.500 901.500 436 903.500 L436.500 910 L437 904.500 Q438.500 903 440 905 L440 911 L440.500 907 Q442 905.500 443.500 907 L443.500 916 Q443 921 439 922 L433 922 Q431 922 430 920Z" fill="#fff" stroke="#222" stroke-width="1"/>
<rect x="482" y="871" width="55" height="61" fill="#fff" stroke="#c9c9c9"/>
<rect x="486" y="880" width="47" height="26" fill="#000" opacity=".18" filter="url(#sh)"/>
<rect x="488" y="904" width="41" height="28" fill="#fff" stroke="#333" stroke-width="2"/>
<g clip-path="url(#tp)">
<rect x="490" y="864" width="38" height="68" fill="#fff"/>
<path d="M490 866h12v5h-12z" fill="#f5c93c"/><path d="M500 870q4 2 8-2" stroke="#23a35f" stroke-width="2" fill="none"/><path d="M516 868q6 2 11 6" stroke="#b9a4e0" stroke-width="2" fill="none"/>
<circle cx="497" cy="877" r="3" fill="#6e5ab8"/><circle cx="504" cy="883" r="3.500" fill="none" stroke="#b9a4e0" stroke-width="2"/>
<path d="M518 880l3 5h-6z" fill="none" stroke="#f2604c" stroke-width="2.300"/>
<path d="M493 882l4 3M493 890l3-2" stroke="#3ac0b0" stroke-width="2"/>
<path d="M505 895q4 2 6-1l1-4" stroke="#5a49a8" stroke-width="2.500" fill="none"/>
<path d="M517 892q4-4 8 0" stroke="#f4b6c8" stroke-width="2.200" fill="none"/>
<path d="M499 898l6 4" stroke="#23a35f" stroke-width="2.200"/><path d="M515 898l4 3" stroke="#f5c93c" stroke-width="2"/>
<path d="M491 901q4 3 1 8" stroke="#c9b6ea" stroke-width="2.200" fill="none"/>
<path d="M507 906q4 2 2 5l-4 1" stroke="#f2604c" stroke-width="2.200" fill="none"/>
<circle cx="524" cy="910" r="3" fill="none" stroke="#f5c93c" stroke-width="2"/>
<path d="M496 913l3 5q2 3 5 1" stroke="#3ac0b0" stroke-width="2.200" fill="none"/>
<circle cx="517" cy="916" r="3" fill="none" stroke="#8ab8ea" stroke-width="2"/>
<path d="M492 921q6 4 11 1" stroke="#7ddd98" stroke-width="2.200" fill="none"/>
<path d="M495 932l3-5 4 4M512 932l5-4 5 4" stroke="#f4c3d2" stroke-width="2" fill="none"/>
</g>
<path d="M569.3 932 A56 56 0 1 1 680.7 932Z" fill="#8b40ff"/>
<path d="M698 895l5-4.500 5 4.500" fill="none" stroke="#333" stroke-width="1.400"/>
<rect x="756" y="872" width="110" height="60" fill="#000" opacity=".16" filter="url(#sh)"/>
<polygon points="737,900 765,894 773,932 744,932" fill="#7ddd98"/>
<polygon points="747,884 765,880 778,932 758,932" fill="#74d38f"/>
<rect x="760" y="870" width="104" height="62" fill="#7ddd98"/>
<path d="M882 895l5-4.500 5 4.500" fill="none" stroke="#333" stroke-width="1.400"/>
<rect x="930.500" y="874.500" width="39" height="39" rx="9" fill="#fff" stroke="#cfcfcf"/>
<path d="M941 884.500h19M950.500 884.500v20.500" stroke="#222" stroke-width="1.500" fill="none"/>
<rect x="928.500" y="892" width="3.500" height="5" fill="#222"/><rect x="968" y="892" width="3.500" height="5" fill="#222"/>
<rect x="986.500" y="874.500" width="63" height="39" rx="9" fill="#fff" stroke="#cfcfcf"/>
<path d="M1025.500 875v39" stroke="#cfcfcf"/>
<path d="M994 906L1018 882" stroke="#222" stroke-width="1.500"/>
<circle cx="988" cy="912" r="2" fill="#222"/><circle cx="1024" cy="876" r="2" fill="#222"/>
<path d="M1033.500 895l4.500-4.500 4.500 4.500" fill="none" stroke="#333" stroke-width="1.300"/>
<rect x="1067.500" y="874.500" width="38" height="39" rx="9" fill="#fff" stroke="#cfcfcf"/>
<rect x="1073.500" y="880.500" width="13" height="6.500" fill="#fff" stroke="#222" stroke-width="1.500"/>
<path d="M1090 880.500h6a3 3 0 0 1 3 3v20.500a3 3 0 0 1-3 3h-20a3 3 0 0 1-3-3v-14" fill="none" stroke="#222" stroke-width="1.800"/>
<rect x="1123.500" y="874.500" width="38" height="39" rx="9" fill="#fff" stroke="#cfcfcf"/>
<path d="M1141 880c-4 0-6 3-6 6s3 4 3 7v3.500h6V893c0-3 3-4 3-7s-2-6-6-6z" fill="none" stroke="#222" stroke-width="1.500"/>
<rect x="1133" y="896.500" width="16.500" height="7" fill="#fff" stroke="#222" stroke-width="1.500"/>
<path d="M1133 907h17" stroke="#222" stroke-width="2"/>
<rect x="1179.500" y="874.500" width="38" height="39" rx="9" fill="#fff" stroke="#cfcfcf"/>
<path d="M1193 880.500l4 5-4 5-4-5z" fill="none" stroke="#222" stroke-width="1.400"/>
<path d="M1201.500 878l1 2.500 2.500 1-2.500 1-1 2.500-1-2.500-2.500-1 2.500-1z" fill="#222"/>
<path d="M1198.500 893v-1a3.200 3.200 0 0 1 6.400 0v1" fill="none" stroke="#222" stroke-width="1.400"/>
<path d="M1184 893h28v10a4 4 0 0 1-4 4h-20a4 4 0 0 1-4-4z" fill="none" stroke="#222" stroke-width="1.800"/>
</svg>
</div>
</body></html>
